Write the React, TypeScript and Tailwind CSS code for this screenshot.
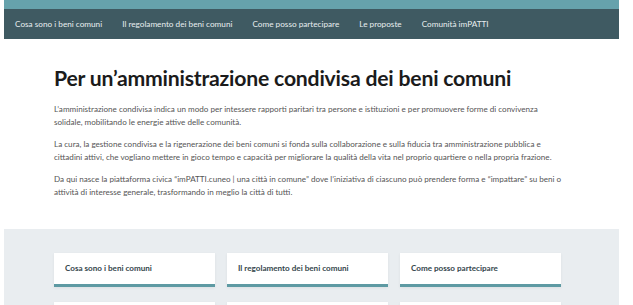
import React from "react";

const nav = [
  "Cosa sono i beni comuni",
  "Il regolamento dei beni comuni",
  "Come posso partecipare",
  "Le proposte",
  "Comunità imPATTI",
];

export default function App() {
  return (
    <div className="w-[633px] h-[305px] overflow-hidden bg-white" style={{ fontFamily: "Lato, 'Open Sans', sans-serif" }}>
      <div className="ml-[4px] w-[615px]">
        <div className="h-[9px] bg-[#66a2ac]" />
        <nav className="h-[30px] bg-[#3f5a62] flex items-center pl-[11px] gap-[20px] text-[8.2px] text-[#e8eef0]">
          {nav.map((n) => (
            <span key={n}>{n}</span>
          ))}
        </nav>
        <section className="pl-[50px] pr-[52px] pt-[26px] pb-[30px]">
          <h1 className="text-[21.2px] leading-[26px] font-bold text-[#1b1b1b] tracking-[-0.2px]">
            Per un’amministrazione condivisa dei beni comuni
          </h1>
          <div className="mt-[12px] text-[8.1px] leading-[13px] text-[#555] flex flex-col gap-[9px]">
            <p>
              L’amministrazione condivisa indica un modo per intessere rapporti paritari tra persone e istituzioni e per promuovere forme di convivenza solidale, mobilitando le energie attive delle comunità.
            </p>
            <p>
              La cura, la gestione condivisa e la rigenerazione dei beni comuni si fonda sulla collaborazione e sulla fiducia tra amministrazione pubblica e cittadini attivi, che vogliano mettere in gioco tempo e capacità per migliorare la qualità della vita nel proprio quartiere o nella propria frazione.
            </p>
            <p>
              Da qui nasce la piattaforma civica “imPATTI.cuneo | una città in comune” dove l’iniziativa di ciascuno può prendere forma e “impattare” su beni o attività di interesse generale, trasformando in meglio la città di tutti.
            </p>
          </div>
        </section>
        <section className="bg-[#e9edf0] pl-[50px] pt-[24px] h-[100px]">
          <div className="grid grid-cols-[161px_161px_161px] gap-x-[12px] gap-y-[15px]">
            {["Cosa sono i beni comuni", "Il regolamento dei beni comuni", "Come posso partecipare", "", "", ""].map((c, i) => (
              <div key={i} className="h-[34px] bg-white border-b-[3px] border-[#5e9aa3] shadow-[0_1px_3px_rgba(0,0,0,0.06)] flex items-center pl-[11px] text-[8.1px] font-bold text-[#34464c]">
                {c}
              </div>
            ))}
          </div>
        </section>
      </div>
    </div>
  );
}
